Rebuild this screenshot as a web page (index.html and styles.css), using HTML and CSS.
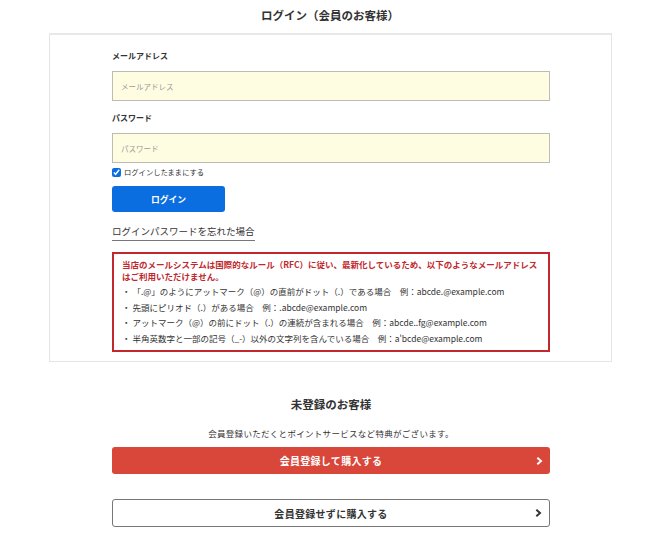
FILE: index.html
```html
<!DOCTYPE html>
<html lang="ja">
<head>
<meta charset="utf-8">
<title>ログイン</title>
<link rel="stylesheet" href="styles.css">
</head>
<body>
<div class="page">
  <h1 class="title">ログイン（会員のお客様）</h1>
  <div class="panel">
    <div class="label label-first">メールアドレス</div>
    <input class="field" type="text" placeholder="メールアドレス">
    <div class="label label-second">パスワード</div>
    <input class="field" type="password" placeholder="パスワード">
    <label class="keep"><input type="checkbox" class="check" checked><span>ログインしたままにする</span></label>
    <button class="login-btn">ログイン</button>
    <div class="forgot-row"><a class="forgot">ログインパスワードを忘れた場合</a></div>
    <div class="notice">
      <p class="notice-head">当店のメールシステムは国際的なルール（RFC）に従い、最新化しているため、以下のようなメールアドレスはご利用いただけません。</p>
      <ul class="notice-list">
        <li>・ 「.@」のようにアットマーク（@）の直前がドット（.）である場合　例：abcde.@example.com</li>
        <li>・ 先頭にピリオド（.）がある場合　例：.abcde@example.com</li>
        <li>・ アットマーク（@）の前にドット（.）の連続が含まれる場合　例：abcde..fg@example.com</li>
        <li>・ 半角英数字と一部の記号（_-）以外の文字列を含んでいる場合　例：a'bcde@example.com</li>
      </ul>
    </div>
  </div>
  <div class="guest">
    <h2 class="guest-title">未登録のお客様</h2>
    <p class="guest-text">会員登録いただくとポイントサービスなど特典がございます。</p>
    <a class="btn btn-red">会員登録して購入する<svg class="chev" viewBox="0 0 8 10" width="7" height="9"><path d="M1.5 1.2 L5.8 5 L1.5 8.8" fill="none" stroke="currentColor" stroke-width="2.2"/></svg></a>
    <a class="btn btn-outline">会員登録せずに購入する<svg class="chev" viewBox="0 0 8 10" width="7" height="9"><path d="M1.5 1.2 L5.8 5 L1.5 8.8" fill="none" stroke="currentColor" stroke-width="2.2"/></svg></a>
  </div>
</div>
</body>
</html>
```

FILE: styles.css
```css
* { box-sizing: border-box; }
body {
  margin: 0;
  background: #fff;
  color: #333;
  font-family: "Noto Sans CJK JP", "Noto Sans", sans-serif;
}
.page { width: 660px; }
.title {
  margin: 0;
  height: 33px;
  padding-top: 7px;
  line-height: 16px;
  font-size: 11.5px;
  font-weight: bold;
  text-align: center;
  color: #333;
}
.panel {
  margin-left: 49px;
  width: 563px;
  border: 1px solid #e4e4e4;
  border-top: 2px solid #e8e8e8;
  padding: 15px 61px 9px 62px;
  display: flex;
  flex-direction: column;
  align-items: flex-start;
}
.label {
  font-size: 8px;
  font-weight: bold;
  line-height: 12px;
  color: #333;
}
.label-second { margin-top: 11px; }
.field {
  margin-top: 9px;
  width: 438px;
  height: 30px;
  background: #fffde1;
  border: 1px solid #bcbcb4;
  border-radius: 0;
  padding: 0 8px;
  font-family: inherit;
  font-size: 7.5px;
  outline: none;
}
.field::placeholder { color: #9a9a9a; }
.keep {
  margin-top: 4px;
  display: flex;
  align-items: center;
  gap: 3px;
  font-size: 7.3px;
  line-height: 10px;
  color: #333;
}
.check {
  margin: 0;
  width: 9px;
  height: 9px;
  accent-color: #0b6ee0;
}
.login-btn {
  margin-top: 9px;
  width: 113px;
  height: 26px;
  border: none;
  border-radius: 3px;
  background: #0b6ee0;
  color: #fff;
  font-family: inherit;
  font-size: 8.8px;
  font-weight: bold;
  padding: 0;
}
.forgot-row {
  margin-top: 13px;
  display: flex;
}
.forgot {
  display: block;
  font-size: 9.5px;
  line-height: 13px;
  color: #333;
  padding-bottom: 2px;
  border-bottom: 1.5px solid #777;
}
.notice {
  margin-top: 11px;
  width: 438px;
  height: 100px;
  border: 2px solid #c1272d;
  padding: 4px 8px 4px 8px;
}
.notice-head {
  margin: 0;
  font-size: 8.5px;
  line-height: 12px;
  font-weight: bold;
  color: #c1272d;
}
.notice-list {
  margin: 2px 0 0;
  padding: 0;
  list-style: none;
  font-size: 8.5px;
  line-height: 15.5px;
  color: #333;
  white-space: nowrap;
}
.guest {
  margin: 0 110px 0 112px;
  display: flex;
  flex-direction: column;
  align-items: center;
}
.guest-title {
  margin: 34px 0 0;
  font-size: 11.5px;
  line-height: 16px;
  font-weight: bold;
  color: #333;
}
.guest-text {
  margin: 15px 0 0;
  font-size: 8.5px;
  letter-spacing: 0.3px;
  line-height: 12px;
  color: #333;
}
.btn {
  position: relative;
  display: flex;
  align-items: center;
  justify-content: center;
  width: 438px;
  border-radius: 3px;
  font-size: 10px;
  font-weight: bold;
  letter-spacing: 0.3px;
}
.btn-red {
  margin-top: 8px;
  height: 27px;
  background: #d9463a;
  color: #fff;
}
.btn-outline {
  margin-top: 25px;
  height: 28px;
  border: 1px solid #777;
  background: #fff;
  color: #333;
}
.chev {
  position: absolute;
  right: 7px;
  top: 50%;
  transform: translateY(-50%);
}
```
